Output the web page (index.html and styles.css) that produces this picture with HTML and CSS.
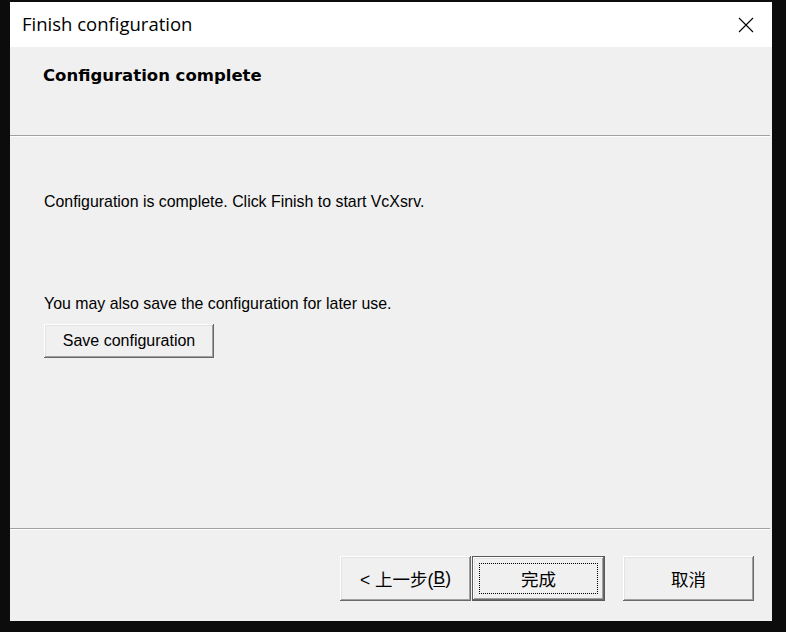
FILE: index.html
```html
<!DOCTYPE html>
<html lang="en">
<head>
<meta charset="utf-8">
<title>Finish configuration</title>
<link rel="stylesheet" href="styles.css">
</head>
<body>
<div class="window">
  <div class="titlebar">
    <span class="title">Finish configuration</span>
    <span class="close" aria-label="Close">
      <svg width="16" height="16" viewBox="0 0 16 16"><path d="M1 1 L15 15 M15 1 L1 15" stroke="#000" stroke-width="1.1" fill="none"/></svg>
    </span>
  </div>
  <div class="header">
    <div class="heading">Configuration complete</div>
  </div>
  <div class="sep"></div>
  <div class="content">
    <p class="msg first">Configuration is complete. Click Finish to start VcXsrv.</p>
    <p class="msg second">You may also save the configuration for later use.</p>
    <button class="btn save">Save configuration</button>
  </div>
  <div class="sep"></div>
  <div class="footer">
    <button class="btn nav">&lt; 上一步(<u>B</u>)</button>
    <button class="btn nav default"><span class="focus">完成</span></button>
    <button class="btn nav cancel">取消</button>
  </div>
</div>
</body>
</html>
```
FILE: styles.css
```css
html, body {
  margin: 0;
  padding: 0;
  background: #0c0c0c;
}
body {
  width: 786px;
  height: 632px;
  overflow: hidden;
}
.window {
  margin: 2px 0 0 10px;
  width: 762px;
  height: 619px;
  background: #f0f0f0;
  display: flex;
  flex-direction: column;
}
.titlebar {
  height: 45px;
  flex: none;
  background: #ffffff;
  display: flex;
  align-items: center;
  justify-content: space-between;
  padding: 0 18px 0 12px;
}
.title {
  font-family: "Open Sans", "Noto Sans", sans-serif;
  font-size: 18.5px;
  color: #000;
  margin-top: -2px;
}
.close {
  display: flex;
  width: 16px;
  height: 16px;
}
.header {
  height: 88px;
  flex: none;
  padding: 19px 0 0 33px;
  box-sizing: border-box;
}
.heading {
  font-family: "DejaVu Sans", sans-serif;
  font-weight: bold;
  font-size: 16.5px;
  line-height: 20px;
  color: #000;
}
.sep {
  height: 1px;
  flex: none;
  border-bottom: 1px solid #ffffff;
  background: #a0a0a0;
  margin-right: 2px;
}
.content {
  height: 391px;
  flex: none;
  padding: 55px 0 0 34px;
  box-sizing: border-box;
}
.msg {
  margin: 0;
  font-family: "Liberation Sans", Arial, sans-serif;
  font-size: 15.9px;
  line-height: 20px;
  color: #000;
}
.msg.second {
  margin-top: 82px;
}
.btn {
  font-family: "Liberation Sans", "Noto Sans CJK SC", sans-serif;
  font-size: 16px;
  color: #000;
  background: #f0f0f0;
  border: none;
  padding: 0;
  margin: 0;
  box-shadow: inset -1px -1px #696969, inset 1px 1px #ffffff, inset -2px -2px #a0a0a0, inset 2px 2px #e3e3e3;
  display: flex;
  align-items: center;
  justify-content: center;
}
.btn.save {
  margin-top: 10px;
  width: 170px;
  height: 34px;
}
.footer {
  flex: 1;
  display: flex;
  justify-content: flex-end;
  align-items: flex-start;
  padding: 26px 18px 0 0;
}
.btn.nav {
  width: 131px;
  height: 45px;
  font-family: "Liberation Sans", "Noto Sans CJK SC", sans-serif;
  font-size: 17.5px;
}
.btn.nav u {
  text-decoration-thickness: 1px;
  text-underline-offset: 2px;
}
.btn.default {
  width: 133px;
  margin-left: 1px;
  border: 1px solid #5a5a5a;
  box-sizing: border-box;
}
.focus {
  display: flex;
  align-items: center;
  justify-content: center;
  width: 119px;
  height: 31px;
  border: 1px dotted #000;
  box-sizing: border-box;
}
.btn.cancel {
  margin-left: 18px;
}
```
